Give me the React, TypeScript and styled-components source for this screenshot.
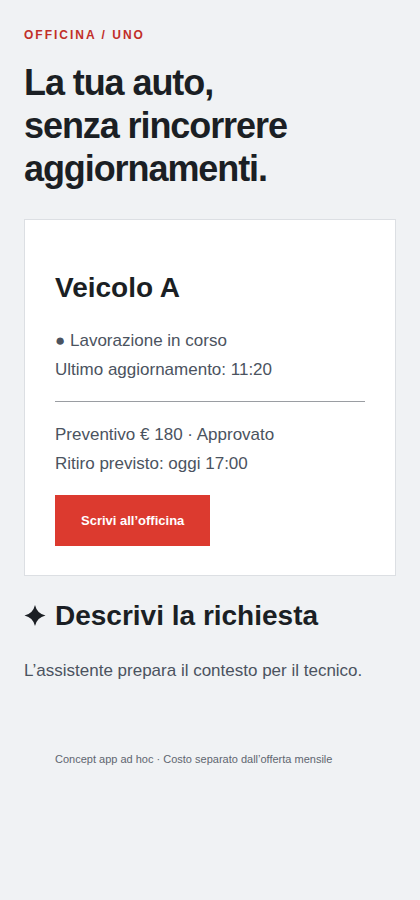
import styled, { createGlobalStyle } from "styled-components";

const GlobalStyle = createGlobalStyle`
  html, body {
    margin: 0;
    padding: 0;
    background: #f0f2f4;
  }

  body {
    font-family: "Liberation Sans", Arial, "DejaVu Sans", sans-serif;
    color: #1b1f24;
  }
`;

// four point sparkle before the section title
const Sparkle = () => (
  <SparkleSvg viewBox="0 0 24 24" aria-hidden="true">
    <path d="M12 0 Q14.2 9.8 24 12 Q14.2 14.2 12 24 Q9.8 14.2 0 12 Q9.8 9.8 12 0Z" />
  </SparkleSvg>
);

const App = () => {
  return (
    <Page>
      <GlobalStyle />

      <Eyebrow>OFFICINA / UNO</Eyebrow>

      <Title>
        La tua auto,
        <br />
        senza rincorrere
        <br />
        aggiornamenti.
      </Title>

      <Card>
        <CardTitle>Veicolo A</CardTitle>

        <Line>● Lavorazione in corso</Line>
        <Line>Ultimo aggiornamento: 11:20</Line>

        <Divider />

        <Line>Preventivo € 180 · Approvato</Line>
        <Line>Ritiro previsto: oggi 17:00</Line>

        <Action type="button">Scrivi all’officina</Action>
      </Card>

      <SectionTitle>
        <Sparkle />
        <span>Descrivi la richiesta</span>
      </SectionTitle>

      <Lead>L’assistente prepara il contesto per il tecnico.</Lead>

      <Footnote>Concept app ad hoc · Costo separato dall’offerta mensile</Footnote>
    </Page>
  );
};

export default App;

const Page = styled.main`
  min-height: 900px;
  box-sizing: border-box;
  padding: 28px 24px 40px;
`;

const Eyebrow = styled.p`
  margin: 0 0 19px;
  font-size: 12px;
  font-weight: 700;
  letter-spacing: 2px;
  color: #c12e28;
`;

const Title = styled.h1`
  margin: 0 0 28px;
  font-size: 36px;
  line-height: 1.2;
  font-weight: 700;
  letter-spacing: -0.03em;
  color: #1b1f24;
`;

const Card = styled.section`
  background: #ffffff;
  border: 1px solid #dcdfe3;
  padding: 30px 30px 29px;
`;

const CardTitle = styled.h2`
  margin: 22px 0 22px;
  font-size: 28px;
  font-weight: 700;
  color: #1b1f24;
`;

const Line = styled.p`
  margin: 0;
  font-size: 17px;
  line-height: 29px;
  color: #4b5360;
`;

const Divider = styled.hr`
  margin: 17px 0 18px;
  border: none;
  border-top: 1px solid #9a9da2;
`;

const Action = styled.button`
  display: block;
  margin-top: 17px;
  height: 51px;
  padding: 0 26px;
  border: none;
  border-radius: 0;
  background: #dc3a2f;
  color: #ffffff;
  font-family: "Liberation Sans", Arial, sans-serif;
  font-size: 13px;
  font-weight: 700;
`;

const SectionTitle = styled.h2`
  display: flex;
  align-items: center;
  gap: 9px;
  margin: 24px 0 24px;
  font-size: 28px;
  font-weight: 700;
  color: #1b1f24;
`;

const SparkleSvg = styled.svg`
  width: 22px;
  height: 21px;
  flex-shrink: 0;
  fill: #1b1f24;
`;

const Lead = styled.p`
  margin: 0;
  font-size: 17px;
  line-height: 29px;
  color: #4b5360;
`;

const Footnote = styled.p`
  margin: 68px 0 0;
  padding-left: 31px;
  font-size: 11px;
  color: #5f6670;
`;
